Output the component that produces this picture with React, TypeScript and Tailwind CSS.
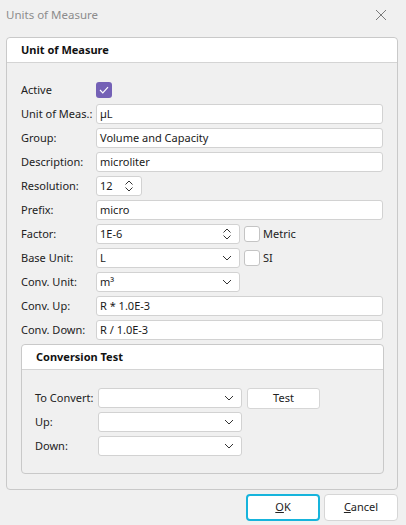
import React from 'react'

const font = { fontFamily: '"Noto Sans", "Open Sans", sans-serif' }

function ChevronDown() {
  return (
    <svg width="10" height="6" viewBox="0 0 10 6" className="shrink-0">
      <path d="M1 1 L5 5 L9 1" fill="none" stroke="#333" strokeWidth="1" />
    </svg>
  )
}

function Spin() {
  return (
    <svg width="10" height="12" viewBox="0 0 10 12" className="shrink-0">
      <path d="M1.5 4.5 L5 1 L8.5 4.5" fill="none" stroke="#333" strokeWidth="1" />
      <path d="M1.5 7.5 L5 11 L8.5 7.5" fill="none" stroke="#333" strokeWidth="1" />
    </svg>
  )
}

function Field({ value, className = 'w-[287px]' }: { value?: React.ReactNode; className?: string }) {
  return (
    <div className={`${className} h-[20px] bg-white border border-[#d2d2d2] rounded-[3px] flex items-center pl-[3px] text-[11px] text-[#1a1a1a] whitespace-nowrap`}>
      {value}
    </div>
  )
}

function Combo({ value, width = 'w-[144px]', spin = false }: { value?: string; width?: string; spin?: boolean }) {
  return (
    <div className={`${width} h-[20px] bg-white border border-[#d2d2d2] rounded-[3px] flex items-center justify-between pl-[3px] pr-[7px] text-[11px] text-[#1a1a1a]`}>
      <span>{value}</span>
      {spin ? <Spin /> : <ChevronDown />}
    </div>
  )
}

function Box() {
  return <div className="w-[16px] h-[16px] bg-white border border-[#c4c4c4] rounded-[3px] shrink-0" />
}

function Row({ label, children }: { label: string; children: React.ReactNode }) {
  return (
    <div className="flex items-center h-[20px]">
      <div className="w-[75px] shrink-0 whitespace-nowrap text-[11px] text-[#222]">{label}</div>
      {children}
    </div>
  )
}

export default function App() {
  return (
    <div className="w-[406px] h-[525px] bg-[#f0f0f0] flex flex-col overflow-hidden" style={font}>
      <div className="h-[30px] flex items-center justify-between pl-[6px] pr-[19px]">
        <span className="text-[11.5px] text-[#8c8c8c]">Units of Measure</span>
        <svg width="12" height="12" viewBox="0 0 12 12">
          <path d="M1 1 L11 11 M11 1 L1 11" stroke="#7a7a7a" strokeWidth="1" />
        </svg>
      </div>

      <div className="mt-[7px] ml-[6px] w-[392px] h-[453px] border border-[#c9c9c9] rounded-[4px] flex flex-col">
        <div className="h-[25px] bg-white border-b border-[#d4d4d4] rounded-t-[4px] flex items-center pl-[14px] text-[11px] font-bold text-[#111]">
          Unit of Measure
        </div>
        <div className="flex flex-col gap-[4px] pt-[17px] pl-[14px]">
          <Row label="Active">
            <div className="w-[16px] h-[16px] rounded-[3px] bg-[#7461b6] flex items-center justify-center">
              <svg width="10" height="8" viewBox="0 0 10 8">
                <path d="M1 4 L3.8 6.8 L9 1.2" fill="none" stroke="white" strokeWidth="1.2" />
              </svg>
            </div>
          </Row>
          <Row label="Unit of Meas.:"><Field value="µL" /></Row>
          <Row label="Group:"><Field value="Volume and Capacity" /></Row>
          <Row label="Description:"><Field value="microliter" /></Row>
          <Row label="Resolution:"><Combo value="12" width="w-[46px]" spin /></Row>
          <Row label="Prefix:"><Field value="micro" /></Row>
          <Row label="Factor:">
            <Combo value="1E-6" spin />
            <div className="ml-[4px] flex items-center gap-[3px] text-[11px] text-[#222]"><Box />Metric</div>
          </Row>
          <Row label="Base Unit:">
            <Combo value="L" />
            <div className="ml-[4px] flex items-center gap-[3px] text-[11px] text-[#222]"><Box />SI</div>
          </Row>
          <Row label="Conv. Unit:"><Combo value="m³" /></Row>
          <Row label="Conv. Up:"><Field value="R * 1.0E-3" /></Row>
          <Row label="Conv. Down:"><Field value="R / 1.0E-3" /></Row>

          <div className="w-[363px] h-[130px] border border-[#c9c9c9] rounded-[4px] flex flex-col">
            <div className="h-[25px] bg-white border-b border-[#d4d4d4] rounded-t-[4px] flex items-center pl-[14px] text-[11px] font-bold text-[#111]">
              Conversion Test
            </div>
            <div className="flex flex-col gap-[4px] pt-[18px] pl-[13px]">
              <div className="flex items-center h-[20px]">
                <div className="w-[63px] shrink-0 whitespace-nowrap text-[11px] text-[#222]">To Convert:</div>
                <Combo />
                <div className="ml-[5px] w-[73px] h-[21px] bg-white border border-[#d6d6d6] rounded-[3px] flex items-center justify-center text-[11px] text-[#222]">
                  Test
                </div>
              </div>
              <div className="flex items-center h-[20px]">
                <div className="w-[63px] shrink-0 text-[11px] text-[#222]">Up:</div>
                <Combo />
              </div>
              <div className="flex items-center h-[20px]">
                <div className="w-[63px] shrink-0 text-[11px] text-[#222]">Down:</div>
                <Combo />
              </div>
            </div>
          </div>
        </div>
      </div>

      <div className="flex justify-end gap-[4px] pr-[8px] mt-[4px]">
        <div className="w-[74px] h-[27px] bg-white border-2 border-[#16b4dc] rounded-[4px] flex items-center justify-center text-[11px] text-[#222]">
          <span><span className="underline">O</span>K</span>
        </div>
        <div className="w-[74px] h-[27px] bg-white border border-[#d6d6d6] rounded-[4px] flex items-center justify-center text-[11px] text-[#222]">
          <span><span className="underline">C</span>ancel</span>
        </div>
      </div>
    </div>
  )
}
